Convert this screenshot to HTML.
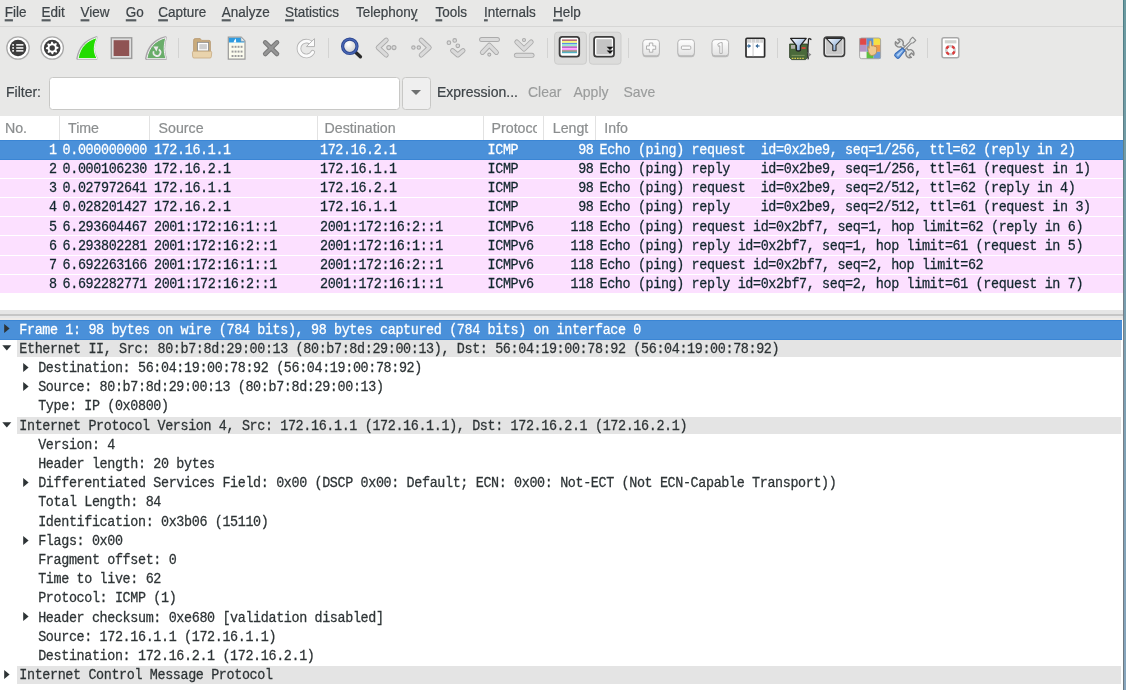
<!DOCTYPE html><html><head><meta charset="utf-8"><style>
*{margin:0;padding:0;box-sizing:border-box}
html,body{width:1126px;height:690px;overflow:hidden;background:#e8e8e7}
body{position:relative;font-family:"Liberation Sans",sans-serif;-webkit-font-smoothing:antialiased}
.g{will-change:transform}
.a{position:absolute}
.m{position:absolute;top:4px;font-size:13.5px;line-height:17px;color:#3e4448;white-space:pre;-webkit-text-stroke-width:0.2px;transform:scaleY(1.1);transform-origin:0 13px}
.m u{text-decoration:underline;text-decoration-thickness:1.6px;text-underline-offset:1.5px;text-decoration-color:#565c60}
.hd{position:absolute;top:117.5px;font-size:14.2px;line-height:20px;color:#8b8e8f;white-space:pre;overflow:hidden;-webkit-text-stroke-width:0.2px}
.sep{position:absolute;top:116px;width:1px;height:24px;background:#e2e2e2}
.pr{position:absolute;left:0;width:1123px;height:19px;font-family:"Liberation Mono",monospace;font-size:13.4px;letter-spacing:-0.36px;line-height:19px;white-space:pre;color:#12272e;-webkit-text-stroke-width:0.25px}
.pr span{position:absolute;top:0.6px;transform:scaleY(1.1);transform-origin:0 9px}
.dr{position:absolute;left:0;width:1123px;height:19.2px;font-family:"Liberation Mono",monospace;font-size:13.4px;letter-spacing:-0.36px;line-height:19px;white-space:pre;color:#2e3436;-webkit-text-stroke-width:0.25px}
.dr .t{position:absolute;top:1px;transform:scaleY(1.1);transform-origin:0 9px}
.tb{position:absolute}
</style></head><body><div class="g" style="position:absolute;left:0;top:0;width:1126px;height:690px">

<div class="m" style="left:4.7px"><u>F</u>ile</div>
<div class="m" style="left:41.6px"><u>E</u>dit</div>
<div class="m" style="left:80.6px"><u>V</u>iew</div>
<div class="m" style="left:125.8px"><u>G</u>o</div>
<div class="m" style="left:158.2px"><u>C</u>apture</div>
<div class="m" style="left:221.7px"><u>A</u>nalyze</div>
<div class="m" style="left:285px"><u>S</u>tatistics</div>
<div class="m" style="left:356px">Telephon<u>y</u></div>
<div class="m" style="left:435.5px"><u>T</u>ools</div>
<div class="m" style="left:484px"><u>I</u>nternals</div>
<div class="m" style="left:553px"><u>H</u>elp</div>
<div class="a" style="left:0;top:26px;width:1123px;height:1px;background:#d6d6d5"></div>
<div class="a" style="left:178.0px;top:38px;width:1px;height:20px;background:#d3d3d2"></div>
<div class="a" style="left:327.5px;top:38px;width:1px;height:20px;background:#d3d3d2"></div>
<div class="a" style="left:546.5px;top:38px;width:1px;height:20px;background:#d3d3d2"></div>
<div class="a" style="left:627.5px;top:38px;width:1px;height:20px;background:#d3d3d2"></div>
<div class="a" style="left:777.0px;top:38px;width:1px;height:20px;background:#d3d3d2"></div>
<div class="a" style="left:926.5px;top:38px;width:1px;height:20px;background:#d3d3d2"></div>
<div class="a" style="left:6px;top:84px;font-size:14px;line-height:17px;color:#3e4448;-webkit-text-stroke-width:0.2px;transform:scaleY(1.08);transform-origin:0 13px">Filter:</div>
<div class="a" style="left:48.5px;top:76.5px;width:351px;height:33px;background:#fff;border:1.5px solid #c8c8c6;border-radius:3.5px"></div>
<div class="a" style="left:401.5px;top:76.5px;width:29px;height:33px;background:#efefef;border:1.5px solid #c8c8c6;border-radius:3.5px"></div>
<div class="a" style="left:411px;top:90px;width:0;height:0;border-left:5px solid transparent;border-right:5px solid transparent;border-top:5px solid #6e7070"></div>
<div class="a" style="left:437px;top:84px;font-size:14px;line-height:17px;color:#3e4448;-webkit-text-stroke-width:0.2px;transform:scaleY(1.08);transform-origin:0 13px">Expression...</div>
<div class="a" style="left:528px;top:84px;font-size:14px;line-height:17px;color:#9a9c9c;-webkit-text-stroke-width:0.15px;transform:scaleY(1.08);transform-origin:0 13px">Clear</div>
<div class="a" style="left:573.5px;top:84px;font-size:14px;line-height:17px;color:#9a9c9c;-webkit-text-stroke-width:0.15px;transform:scaleY(1.08);transform-origin:0 13px">Apply</div>
<div class="a" style="left:623.5px;top:84px;font-size:14px;line-height:17px;color:#9a9c9c;-webkit-text-stroke-width:0.15px;transform:scaleY(1.08);transform-origin:0 13px">Save</div>
<div class="a" style="left:0;top:116px;width:1123px;height:194px;background:#fff"></div>
<div class="hd" style="left:4.9px;width:50px">No.</div>
<div class="hd" style="left:68px;width:80px">Time</div>
<div class="hd" style="left:158.6px;width:150px">Source</div>
<div class="hd" style="left:324.6px;width:150px">Destination</div>
<div class="hd" style="left:491.6px;width:45.5px">Protocol</div>
<div class="hd" style="left:552.8px;width:36.5px">Length</div>
<div class="hd" style="left:604.3px;width:200px">Info</div>
<div class="sep" style="left:59.0px"></div>
<div class="sep" style="left:149.3px"></div>
<div class="sep" style="left:316.5px"></div>
<div class="sep" style="left:483.1px"></div>
<div class="sep" style="left:543.3px"></div>
<div class="sep" style="left:595.0px"></div>
<div class="pr" style="top:140.0px;height:19.7px;background:#4a90d9;color:#ffffff;box-shadow:inset 0 1px #3a85d4,inset 0 -1px #3a85d4;">
<span style="left:49.12px">1</span>
<span style="left:62.6px">0.000000000</span>
<span style="left:154px">172.16.1.1</span>
<span style="left:320px">172.16.2.1</span>
<span style="left:487.6px">ICMP</span>
<span style="left:578.14px">98</span>
<span style="left:599.5px">Echo (ping) request  id=0x2be9, seq=1/256, ttl=62 (reply in 2)</span>
</div>
<div class="pr" style="top:159.5px;height:18.3px;background:#fce0ff;color:#12272e;">
<span style="left:49.12px">2</span>
<span style="left:62.6px">0.000106230</span>
<span style="left:154px">172.16.2.1</span>
<span style="left:320px">172.16.1.1</span>
<span style="left:487.6px">ICMP</span>
<span style="left:578.14px">98</span>
<span style="left:599.5px">Echo (ping) reply    id=0x2be9, seq=1/256, ttl=61 (request in 1)</span>
</div>
<div class="pr" style="top:178.70000000000002px;height:18.3px;background:#fce0ff;color:#12272e;">
<span style="left:49.12px">3</span>
<span style="left:62.6px">0.027972641</span>
<span style="left:154px">172.16.1.1</span>
<span style="left:320px">172.16.2.1</span>
<span style="left:487.6px">ICMP</span>
<span style="left:578.14px">98</span>
<span style="left:599.5px">Echo (ping) request  id=0x2be9, seq=2/512, ttl=62 (reply in 4)</span>
</div>
<div class="pr" style="top:197.9px;height:18.3px;background:#fce0ff;color:#12272e;">
<span style="left:49.12px">4</span>
<span style="left:62.6px">0.028201427</span>
<span style="left:154px">172.16.2.1</span>
<span style="left:320px">172.16.1.1</span>
<span style="left:487.6px">ICMP</span>
<span style="left:578.14px">98</span>
<span style="left:599.5px">Echo (ping) reply    id=0x2be9, seq=2/512, ttl=61 (request in 3)</span>
</div>
<div class="pr" style="top:217.10000000000002px;height:18.3px;background:#fce0ff;color:#12272e;">
<span style="left:49.12px">5</span>
<span style="left:62.6px">6.293604467</span>
<span style="left:154px">2001:172:16:1::1</span>
<span style="left:320px">2001:172:16:2::1</span>
<span style="left:487.6px">ICMPv6</span>
<span style="left:570.46px">118</span>
<span style="left:599.5px">Echo (ping) request id=0x2bf7, seq=1, hop limit=62 (reply in 6)</span>
</div>
<div class="pr" style="top:236.3px;height:18.3px;background:#fce0ff;color:#12272e;">
<span style="left:49.12px">6</span>
<span style="left:62.6px">6.293802281</span>
<span style="left:154px">2001:172:16:2::1</span>
<span style="left:320px">2001:172:16:1::1</span>
<span style="left:487.6px">ICMPv6</span>
<span style="left:570.46px">118</span>
<span style="left:599.5px">Echo (ping) reply id=0x2bf7, seq=1, hop limit=61 (request in 5)</span>
</div>
<div class="pr" style="top:255.5px;height:18.3px;background:#fce0ff;color:#12272e;">
<span style="left:49.12px">7</span>
<span style="left:62.6px">6.692263166</span>
<span style="left:154px">2001:172:16:1::1</span>
<span style="left:320px">2001:172:16:2::1</span>
<span style="left:487.6px">ICMPv6</span>
<span style="left:570.46px">118</span>
<span style="left:599.5px">Echo (ping) request id=0x2bf7, seq=2, hop limit=62</span>
</div>
<div class="pr" style="top:274.70000000000005px;height:18.3px;background:#fce0ff;color:#12272e;">
<span style="left:49.12px">8</span>
<span style="left:62.6px">6.692282771</span>
<span style="left:154px">2001:172:16:2::1</span>
<span style="left:320px">2001:172:16:1::1</span>
<span style="left:487.6px">ICMPv6</span>
<span style="left:570.46px">118</span>
<span style="left:599.5px">Echo (ping) reply id=0x2bf7, seq=2, hop limit=61 (request in 7)</span>
</div>
<div class="a" style="left:0;top:310px;width:1123px;height:4px;background:#e6e6e6"></div>
<div class="a" style="left:0;top:314px;width:1123px;height:1.5px;background:#c6c6c6"></div>
<div class="a" style="left:0;top:315.5px;width:1123px;height:2.5px;background:#e8e8e8"></div>
<div class="a" style="left:0;top:318px;width:1123px;height:1.6px;background:#efebe7"></div>
<div class="a" style="left:0;top:319.6px;width:1123px;height:371px;background:#fff"></div>
<div class="a" style="left:0;top:319.6px;width:1122px;height:20.1px;background:#4a90d9;box-shadow:inset 0 1px #3a85d4,inset 0 -1px #3a85d4"></div>
<svg class="a" style="left:4.0px;top:324.40000000000003px" width="7" height="10" viewBox="0 0 7 10"><polygon points="0.2,0 0.2,9 5.6,4.5" fill="#2e3436"/></svg>
<div class="dr" style="top:319.6px;pointer-events:none"><span class="t" style="left:19.3px;color:#ffffff">Frame 1: 98 bytes on wire (784 bits), 98 bytes captured (784 bits) on interface 0</span></div>
<div class="a" style="left:17px;top:339.8px;width:1104px;height:17.6px;background:#e4e4e4"></div>
<svg class="a" style="left:2.0px;top:345.1px" width="10" height="7" viewBox="0 0 10 7"><polygon points="0.3,0.2 9.3,0.2 4.8,5.6" fill="#2e3436"/></svg>
<div class="dr" style="top:338.8px;pointer-events:none"><span class="t" style="left:19.3px;color:#2e3436">Ethernet II, Src: 80:b7:8d:29:00:13 (80:b7:8d:29:00:13), Dst: 56:04:19:00:78:92 (56:04:19:00:78:92)</span></div>
<svg class="a" style="left:23.3px;top:362.8px" width="7" height="10" viewBox="0 0 7 10"><polygon points="0.2,0 0.2,9 5.6,4.5" fill="#2e3436"/></svg>
<div class="dr" style="top:358.0px;pointer-events:none"><span class="t" style="left:38.2px;color:#2e3436">Destination: 56:04:19:00:78:92 (56:04:19:00:78:92)</span></div>
<svg class="a" style="left:23.3px;top:382.00000000000006px" width="7" height="10" viewBox="0 0 7 10"><polygon points="0.2,0 0.2,9 5.6,4.5" fill="#2e3436"/></svg>
<div class="dr" style="top:377.20000000000005px;pointer-events:none"><span class="t" style="left:38.2px;color:#2e3436">Source: 80:b7:8d:29:00:13 (80:b7:8d:29:00:13)</span></div>
<div class="dr" style="top:396.40000000000003px;pointer-events:none"><span class="t" style="left:38.2px;color:#2e3436">Type: IP (0x0800)</span></div>
<div class="a" style="left:17px;top:416.6px;width:1104px;height:17.6px;background:#e4e4e4"></div>
<svg class="a" style="left:2.0px;top:421.90000000000003px" width="10" height="7" viewBox="0 0 10 7"><polygon points="0.3,0.2 9.3,0.2 4.8,5.6" fill="#2e3436"/></svg>
<div class="dr" style="top:415.6px;pointer-events:none"><span class="t" style="left:19.3px;color:#2e3436">Internet Protocol Version 4, Src: 172.16.1.1 (172.16.1.1), Dst: 172.16.2.1 (172.16.2.1)</span></div>
<div class="dr" style="top:434.8px;pointer-events:none"><span class="t" style="left:38.2px;color:#2e3436">Version: 4</span></div>
<div class="dr" style="top:454.0px;pointer-events:none"><span class="t" style="left:38.2px;color:#2e3436">Header length: 20 bytes</span></div>
<svg class="a" style="left:23.3px;top:478.00000000000006px" width="7" height="10" viewBox="0 0 7 10"><polygon points="0.2,0 0.2,9 5.6,4.5" fill="#2e3436"/></svg>
<div class="dr" style="top:473.20000000000005px;pointer-events:none"><span class="t" style="left:38.2px;color:#2e3436">Differentiated Services Field: 0x00 (DSCP 0x00: Default; ECN: 0x00: Not-ECT (Not ECN-Capable Transport))</span></div>
<div class="dr" style="top:492.4px;pointer-events:none"><span class="t" style="left:38.2px;color:#2e3436">Total Length: 84</span></div>
<div class="dr" style="top:511.6px;pointer-events:none"><span class="t" style="left:38.2px;color:#2e3436">Identification: 0x3b06 (15110)</span></div>
<svg class="a" style="left:23.3px;top:535.5999999999999px" width="7" height="10" viewBox="0 0 7 10"><polygon points="0.2,0 0.2,9 5.6,4.5" fill="#2e3436"/></svg>
<div class="dr" style="top:530.8px;pointer-events:none"><span class="t" style="left:38.2px;color:#2e3436">Flags: 0x00</span></div>
<div class="dr" style="top:550.0px;pointer-events:none"><span class="t" style="left:38.2px;color:#2e3436">Fragment offset: 0</span></div>
<div class="dr" style="top:569.2px;pointer-events:none"><span class="t" style="left:38.2px;color:#2e3436">Time to live: 62</span></div>
<div class="dr" style="top:588.4000000000001px;pointer-events:none"><span class="t" style="left:38.2px;color:#2e3436">Protocol: ICMP (1)</span></div>
<svg class="a" style="left:23.3px;top:612.4px" width="7" height="10" viewBox="0 0 7 10"><polygon points="0.2,0 0.2,9 5.6,4.5" fill="#2e3436"/></svg>
<div class="dr" style="top:607.6px;pointer-events:none"><span class="t" style="left:38.2px;color:#2e3436">Header checksum: 0xe680 [validation disabled]</span></div>
<div class="dr" style="top:626.8px;pointer-events:none"><span class="t" style="left:38.2px;color:#2e3436">Source: 172.16.1.1 (172.16.1.1)</span></div>
<div class="dr" style="top:646.0px;pointer-events:none"><span class="t" style="left:38.2px;color:#2e3436">Destination: 172.16.2.1 (172.16.2.1)</span></div>
<div class="a" style="left:17px;top:666.2px;width:1104px;height:17.6px;background:#e4e4e4"></div>
<svg class="a" style="left:4.0px;top:670.0px" width="7" height="10" viewBox="0 0 7 10"><polygon points="0.2,0 0.2,9 5.6,4.5" fill="#2e3436"/></svg>
<div class="dr" style="top:665.2px;pointer-events:none"><span class="t" style="left:19.3px;color:#2e3436">Internet Control Message Protocol</span></div>
<div class="a" style="left:1122.5px;top:0;width:3.5px;height:690px;background:linear-gradient(#6a9aa0,#7a9eb0 50%,#88a6be)"></div>
<div class="a" style="left:1122.5px;top:0;width:1px;height:690px;background:linear-gradient(#4c7e86,#7a8088 50%,#6c7880)"></div>
<svg class="a" style="left:0;top:0" width="1126" height="70" viewBox="0 0 1126 70"><defs><linearGradient id="gz" x1="0" y1="0" x2="0" y2="1"><stop offset="0" stop-color="#ffffff"/><stop offset="1" stop-color="#e2e2e2"/></linearGradient><linearGradient id="gf" x1="0" y1="0" x2="1" y2="1"><stop offset="0" stop-color="#ffffff"/><stop offset="1" stop-color="#6a98d0"/></linearGradient><radialGradient id="gm" cx="0.4" cy="0.35" r="0.7"><stop offset="0" stop-color="#ffffff"/><stop offset="1" stop-color="#c8c8c8"/></radialGradient></defs><circle cx="18" cy="48" r="11.2" fill="#ffffff" stroke="#a9a9a9" stroke-width="1.3"/><circle cx="18" cy="48" r="8.3" fill="#3d3d3d"/><rect x="12.2" y="44.0" width="1.8" height="1.7" fill="#e8e8e8"/><rect x="16.2" y="44.0" width="7.2" height="1.7" fill="#e8e8e8"/><rect x="12.2" y="47.1" width="1.8" height="1.7" fill="#e8e8e8"/><rect x="16.2" y="47.1" width="7.2" height="1.7" fill="#e8e8e8"/><rect x="12.2" y="50.0" width="1.8" height="1.7" fill="#e8e8e8"/><rect x="16.2" y="50.0" width="7.2" height="1.7" fill="#e8e8e8"/><circle cx="52.2" cy="48" r="11.2" fill="#ffffff" stroke="#a9a9a9" stroke-width="1.3"/><circle cx="52.2" cy="48" r="8.3" fill="#3d3d3d"/><polygon points="52.20,41.70 53.43,41.82 53.96,43.75 54.76,44.18 56.65,43.55 57.44,44.50 56.45,46.24 56.71,47.10 58.50,48.00 58.38,49.23 56.45,49.76 56.02,50.56 56.65,52.45 55.70,53.24 53.96,52.25 53.10,52.51 52.20,54.30 50.97,54.18 50.44,52.25 49.64,51.82 47.75,52.45 46.96,51.50 47.95,49.76 47.69,48.90 45.90,48.00 46.02,46.77 47.95,46.24 48.38,45.44 47.75,43.55 48.70,42.76 50.44,43.75 51.30,43.49" fill="#ffffff" transform="rotate(-8 52.2 48)"/><circle cx="52.2" cy="48" r="2.7" fill="#3d3d3d"/><path d="M77.5,58.5 C79.5,47 86,40.5 96.5,37.5 C93,45 92.5,52 96.5,58.5 Z" fill="#ffffff" stroke="#aaa4ac" stroke-width="2.4" stroke-linejoin="round"/><path d="M77.5,58.5 C79.5,47 86,40.5 96.5,37.5 C93,45 92.5,52 96.5,58.5 Z" fill="#22dc00" stroke="#ffffff" stroke-width="0.9" stroke-linejoin="round" transform="translate(0.6,0.1)"/><rect x="111.3" y="37.8" width="20.4" height="20.6" fill="#dedede" stroke="#9c9c9c" stroke-width="1.4"/><rect x="113.6" y="40.2" width="15.6" height="15.8" fill="#8f5353"/><path d="M146.4,58.6 C148.2,47 155,40.2 165.4,37.6 C163.2,45 163.0,52 165.6,58.6 Z" fill="#f0f0f0" stroke="#a8a4a8" stroke-width="2.8" stroke-linejoin="round"/><path d="M146.4,58.6 C148.2,47 155,40.2 165.4,37.6 C163.2,45 163.0,52 165.6,58.6 Z" fill="#6aad6a" stroke="#f4f0f4" stroke-width="1.0" stroke-linejoin="round" transform="translate(0.5,0.1)"/><path d="M158.75,49.4 A3.5,3.5 0 1 1 153.7,51.2" fill="none" stroke="#eeeaee" stroke-width="1.7"/><path d="M153.4,46.4 L158.4,46.4 L156.4,51.6 Z" fill="#eeeaee"/><path d="M193.6,40.2 Q193.6,38.6 195.2,38.6 L200.2,38.6 L201.6,40.4 L209,40.4 Q210.4,40.4 210.4,41.8 L210.4,56 L193.6,56 Z" fill="#c9ab7c" stroke="#b59770" stroke-width="0.8"/><rect x="197.4" y="42.3" width="11.2" height="8.8" fill="#ffffff" stroke="#8a8a8a" stroke-width="0.9"/><rect x="199.3" y="44.1" width="7.6" height="5.2" fill="#cfcfcf"/><path d="M192.4,52.6 Q192.4,51.2 193.8,51.2 L210.4,51.2 Q211.7,51.2 211.7,52.6 L211.3,56.8 Q211.2,58 210,58 L194,58 Q192.8,58 192.7,56.8 Z" fill="#e9d3ac" stroke="#c6aa80" stroke-width="0.8"/><path d="M228.3,37.2 L241.2,37.2 L245,41 L245,59.2 L228.3,59.2 Z" fill="#fbfbee" stroke="#9a9a9a" stroke-width="1.2"/><path d="M228.9,37.8 L240.9,37.8 L244.4,41.3 L244.4,42.4 L228.9,42.4 Z" fill="#2e9be0"/><path d="M233.5,42.4 Q234.3,39.6 235.8,38.4 L236.2,42.4 Z" fill="#ffffff"/><path d="M241,37.6 L241,41.2 L244.8,41.2" fill="#e8f4fb" stroke="#9a9a9a" stroke-width="0.6"/><rect x="231.6" y="45.8" width="1.9" height="2.0" fill="#9a9a9a"/><rect x="234.6" y="45.8" width="1.9" height="2.0" fill="#9a9a9a"/><rect x="237.6" y="45.8" width="1.9" height="2.0" fill="#9a9a9a"/><rect x="240.6" y="45.8" width="1.9" height="2.0" fill="#9a9a9a"/><rect x="231.6" y="50.6" width="1.9" height="2.0" fill="#9a9a9a"/><rect x="234.6" y="50.6" width="1.9" height="2.0" fill="#9a9a9a"/><rect x="237.6" y="50.6" width="1.9" height="2.0" fill="#9a9a9a"/><rect x="240.6" y="50.6" width="1.9" height="2.0" fill="#9a9a9a"/><rect x="231.6" y="55.0" width="1.9" height="2.0" fill="#9a9a9a"/><rect x="234.6" y="55.0" width="1.9" height="2.0" fill="#9a9a9a"/><rect x="237.6" y="55.0" width="1.9" height="2.0" fill="#9a9a9a"/><rect x="240.6" y="55.0" width="1.9" height="2.0" fill="#9a9a9a"/><path d="M265.2,42.4 L277,54.0 M277,42.4 L265.2,54.0" stroke="#777777" stroke-width="4.6" stroke-linecap="round"/><path d="M265.2,42.4 L277,54.0 M277,42.4 L265.2,54.0" stroke="#959595" stroke-width="2.6" stroke-linecap="round"/><path d="M312.6,44.6 A7.4,7.4 0 1 0 312.8,52.2" fill="none" stroke="#b4b4b4" stroke-width="4.6" stroke-linecap="round"/><path d="M312.6,44.6 A7.4,7.4 0 1 0 312.8,52.2" fill="none" stroke="#fbfbfb" stroke-width="2.8" stroke-linecap="round"/><path d="M314.5,38.6 L314.5,46.6 L306.4,46.6 Z" fill="#fbfbfb" stroke="#b4b4b4" stroke-width="1" stroke-linejoin="round"/><path d="M355.6,52.2 L360.4,56.8" stroke="#2a2a2a" stroke-width="3.4" stroke-linecap="round"/><circle cx="349.8" cy="46.3" r="7.2" fill="url(#gm)" stroke="#2c4690" stroke-width="3.2"/><circle cx="349.8" cy="46.3" r="7.2" fill="none" stroke="#4866b4" stroke-width="1.4"/><path d="M386.2,40.2 L378.2,47.6 L386.2,55.0" fill="none" stroke="#ababab" stroke-width="5.0" stroke-linecap="round" stroke-linejoin="round"/><path d="M386.2,40.2 L378.2,47.6 L386.2,55.0" fill="none" stroke="#dadada" stroke-width="3.2" stroke-linecap="round" stroke-linejoin="round"/><circle cx="388.8" cy="47.6" r="2.0" fill="#dcdcdc" stroke="#ababab" stroke-width="1.1"/><circle cx="394.0" cy="47.6" r="2.0" fill="#dcdcdc" stroke="#ababab" stroke-width="1.1"/><path d="M421.2,40.2 L429.2,47.6 L421.2,55.0" fill="none" stroke="#ababab" stroke-width="5.0" stroke-linecap="round" stroke-linejoin="round"/><path d="M421.2,40.2 L429.2,47.6 L421.2,55.0" fill="none" stroke="#dadada" stroke-width="3.2" stroke-linecap="round" stroke-linejoin="round"/><circle cx="413.4" cy="47.6" r="1.7" fill="#dcdcdc" stroke="#ababab" stroke-width="1.1"/><circle cx="418.8" cy="47.6" r="1.7" fill="#dcdcdc" stroke="#ababab" stroke-width="1.1"/><circle cx="448.9" cy="42.7" r="1.8" fill="#dcdcdc" stroke="#ababab" stroke-width="1.1"/><circle cx="454.7" cy="40.4" r="1.8" fill="#dcdcdc" stroke="#ababab" stroke-width="1.1"/><circle cx="457.8" cy="45.8" r="1.8" fill="#dcdcdc" stroke="#ababab" stroke-width="1.1"/><path d="M452.6,50.6 L457.8,55.0 L463.0,50.6" fill="none" stroke="#ababab" stroke-width="5.0" stroke-linecap="round" stroke-linejoin="round"/><path d="M452.6,50.6 L457.8,55.0 L463.0,50.6" fill="none" stroke="#dadada" stroke-width="3.2" stroke-linecap="round" stroke-linejoin="round"/><path d="M481.6,39.5 L497.4,39.5" fill="none" stroke="#ababab" stroke-width="5.0" stroke-linecap="round" stroke-linejoin="round"/><path d="M481.6,39.5 L497.4,39.5" fill="none" stroke="#dadada" stroke-width="3.2" stroke-linecap="round" stroke-linejoin="round"/><path d="M482.4,52.4 L489.3,45.2 L496.4,52.4" fill="none" stroke="#ababab" stroke-width="5.0" stroke-linecap="round" stroke-linejoin="round"/><path d="M482.4,52.4 L489.3,45.2 L496.4,52.4" fill="none" stroke="#dadada" stroke-width="3.2" stroke-linecap="round" stroke-linejoin="round"/><circle cx="489.3" cy="54.6" r="1.5" fill="#dcdcdc" stroke="#ababab" stroke-width="1.1"/><path d="M516.8,42.0 L524.0,49.0 L531.2,42.0" fill="none" stroke="#ababab" stroke-width="5.0" stroke-linecap="round" stroke-linejoin="round"/><path d="M516.8,42.0 L524.0,49.0 L531.2,42.0" fill="none" stroke="#dadada" stroke-width="3.2" stroke-linecap="round" stroke-linejoin="round"/><circle cx="524.0" cy="40.0" r="1.5" fill="#dcdcdc" stroke="#ababab" stroke-width="1.1"/><path d="M516.4,55.3 L532.0,55.3" fill="none" stroke="#ababab" stroke-width="5.0" stroke-linecap="round" stroke-linejoin="round"/><path d="M516.4,55.3 L532.0,55.3" fill="none" stroke="#dadada" stroke-width="3.2" stroke-linecap="round" stroke-linejoin="round"/><rect x="554.6" y="32.2" width="31.8" height="32" rx="3" fill="#dcdcdb" stroke="#cdcdcc" stroke-width="1"/><rect x="559.6" y="36.9" width="19.6" height="19.8" rx="2.6" fill="#ffffff" stroke="#3d3d3d" stroke-width="1.8"/><rect x="562" y="39.4" width="15" height="1.6" fill="#b46e7c"/><rect x="562" y="41.1" width="15" height="1.7" fill="#f4f86c"/><rect x="562" y="42.9" width="15" height="1.6" fill="#5a90e4"/><rect x="562" y="44.6" width="15" height="1.5" fill="#96f2c4"/><rect x="562" y="46.3" width="15" height="1.6" fill="#b05cbc"/><rect x="562" y="48.2" width="15" height="2.0" fill="#ff94ff"/><rect x="562" y="50.4" width="15" height="1.3" fill="#7e6650"/><rect x="562" y="51.7" width="15" height="1.5" fill="#4eb2c4"/><rect x="589.4" y="32.2" width="31.6" height="32" rx="3" fill="#dcdcdb" stroke="#cdcdcc" stroke-width="1"/><rect x="594.1" y="36.9" width="19.9" height="19.8" rx="2.6" fill="#ffffff" stroke="#3d3d3d" stroke-width="1.8"/><rect x="596.4" y="39.2" width="15.4" height="15.3" fill="#c4c4c4"/><path d="M606.6,46.8 L613.4,46.8 L610,50.0 Z M606.6,50.6 L613.4,50.6 L610,53.8 Z" fill="#111111"/><rect x="642.5999999999999" y="40.6" width="17" height="16.6" rx="3.2" fill="#a8a8a8" opacity="0.7"/><rect x="642.8" y="39.6" width="16.6" height="16.2" rx="3" fill="url(#gz)" stroke="#b4b4b4" stroke-width="1.0"/><rect x="677.5999999999999" y="40.6" width="17" height="16.6" rx="3.2" fill="#a8a8a8" opacity="0.7"/><rect x="677.8" y="39.6" width="16.6" height="16.2" rx="3" fill="url(#gz)" stroke="#b4b4b4" stroke-width="1.0"/><rect x="711.8" y="40.6" width="17" height="16.6" rx="3.2" fill="#a8a8a8" opacity="0.7"/><rect x="712.0" y="39.6" width="16.6" height="16.2" rx="3" fill="url(#gz)" stroke="#b4b4b4" stroke-width="1.0"/><path d="M649.4,43.0 h3.4 v2.8999999999999995 h2.8999999999999995 v3.4 h-2.8999999999999995 v2.8999999999999995 h-3.4 v-2.8999999999999995 h-2.8999999999999995 v-3.4 h2.8999999999999995 Z" fill="#fafafa" stroke="#a8a8a8" stroke-width="0.9"/><rect x="681.4" y="46.0" width="9.4" height="3.4" rx="1" fill="#fafafa" stroke="#a8a8a8" stroke-width="0.9"/><path d="M717.8,44.0 L720.6,42.6 L722.2,42.6 L722.2,53.4 L719.8,53.4 L719.8,45.8 L718.4,46.4 Z" fill="#fafafa" stroke="#a8a8a8" stroke-width="0.9"/><rect x="746.0" y="38.4" width="18.6" height="18.6" rx="1" fill="#ffffff" stroke="#2a2a2a" stroke-width="1.7"/><rect x="746.9" y="39.3" width="16.8" height="3.4" fill="#d2d2d2"/><rect x="751.0" y="39.3" width="0.8" height="3.4" fill="#f4f4f4"/><rect x="755.2" y="39.3" width="0.8" height="3.4" fill="#f4f4f4"/><rect x="759.4" y="39.3" width="0.8" height="3.4" fill="#f4f4f4"/><rect x="752.2" y="42.7" width="1.8" height="13.4" fill="#e2e2e2"/><path d="M746.8,46.0 L750.4,46.0" stroke="#3c6e9c" stroke-width="1.2"/><path d="M748.4,43.8 L751.0,46.0 L748.4,48.2 Z" fill="#3c6e9c"/><path d="M759.6,46.0 L756.0,46.0" stroke="#3c6e9c" stroke-width="1.2"/><path d="M758.0,43.8 L755.4,46.0 L758.0,48.2 Z" fill="#3c6e9c"/><path d="M789.6,44.0 L807.4,44.0 L807.4,57.6 L805.6,59.6 L791.6,59.6 L789.6,57.6 Z" fill="#4a6a3a" stroke="#2c3c24" stroke-width="0.8"/><rect x="791" y="45" width="4" height="3.8" fill="#b0b0a8"/><rect x="801.6" y="47" width="4" height="2" fill="#c84a3a"/><path d="M791.6,55.4 h13" stroke="#8a9a6a" stroke-width="0.8"/><path d="M791.8,58.4 h13" stroke="#d8c850" stroke-width="1.2" stroke-dasharray="1.6,1"/><path d="M808.6,38.4 Q807.4,48 808.2,59.4 M809.2,38.4 L811.4,39.6" fill="none" stroke="#222222" stroke-width="1.2"/><path d="M807.6,52 L811.4,54.6 L808.6,57" fill="#8a8a8a"/><path d="M790.6,38.4 L806.2,38.4 L800.4,45.6 L800.4,50.4 Q798.4,51.6 796.4,50.4 L796.4,45.6 Z" fill="url(#gf)" stroke="#222222" stroke-width="1.3" stroke-linejoin="round"/><rect x="824.2" y="37.2" width="20.2" height="19.2" rx="2.8" fill="#c8c8c8" stroke="#404040" stroke-width="1.8"/><rect x="825.6" y="38.6" width="17.4" height="16.4" rx="1.6" fill="none" stroke="#f2f2f2" stroke-width="0.9"/><path d="M826.2,38.4 L842.4,38.4 L836.0,45.2 L836.0,50.4 Q834.4,51.2 832.8,50.4 L832.8,45.2 Z" fill="url(#gf)" stroke="#2a2a2a" stroke-width="1.1" stroke-linejoin="round"/><rect x="859.6" y="38.0" width="7" height="6.9" fill="#e04848"/><rect x="866.6" y="38.0" width="7" height="6.9" fill="#5a92d8"/><rect x="873.6" y="38.0" width="7" height="6.9" fill="#f6e040"/><rect x="859.6" y="44.9" width="7" height="6.9" fill="#b892c4"/><rect x="866.6" y="44.9" width="7" height="6.9" fill="#6a9ad8"/><rect x="873.6" y="44.9" width="7" height="6.9" fill="#f29a46"/><rect x="859.6" y="51.8" width="7" height="6.9" fill="#f2f2ee"/><rect x="866.6" y="51.8" width="7" height="6.9" fill="#5cc040"/><rect x="873.6" y="51.8" width="7" height="6.9" fill="#6a98d8"/><rect x="859.6" y="38.0" width="21" height="20.7" rx="2" fill="none" stroke="#a0a0a0" stroke-width="0.9"/><path d="M868.4,51.6 L867.6,47.4 Q867.4,46.4 868.4,46.6 L869.0,48.4 L869.4,41.2 Q870.4,40.2 871.2,41.2 L871.6,46.0 Q873.6,45.4 874.6,46.4 Q876.6,46.2 876.8,48 L876.4,53.0 Q875.0,55.6 871.6,55.6 Q869.4,55.4 868.4,51.6 Z" fill="#efc88e" stroke="#b88a4e" stroke-width="0.8"/><g transform="translate(904.6,48.4) rotate(45)"><path d="M3.75,-1.4 L-3.75,-1.4 A4,4 0 0 0 -11.17,-1.6 L-8.2,-1.6 L-8.2,1.6 L-11.17,1.6 A4,4 0 0 0 -3.75,1.4 L3.75,1.4 A4,4 0 0 0 11.17,1.6 L8.2,1.6 L8.2,-1.6 L11.17,-1.6 A4,4 0 0 0 3.75,-1.4 Z" fill="#e4e6e4" stroke="#8a8a8a" stroke-width="1.4" stroke-linejoin="round"/></g><g transform="translate(904.6,48.4) rotate(-45)"><path d="M-1,-1.1 L8.5,-1.1 L10.2,-2.2 L13.6,-2.2 L13.6,2.2 L10.2,2.2 L8.5,1.1 L-1,1.1 Z" fill="#e8eae8" stroke="#8a8a8a" stroke-width="1.1" stroke-linejoin="round"/><path d="M-1.2,-1.7 L-10.4,-2.8 Q-12.2,-2.8 -12.2,-1.2 L-12.2,1.2 Q-12.2,2.8 -10.4,2.8 L-1.2,1.7 Z" fill="#6a9fe0" stroke="#3a6cb8" stroke-width="1.1" stroke-linejoin="round"/><path d="M-3,-0.5 L-10.2,-0.9 L-10.2,0.9 L-3,0.5 Z" fill="#bcd6f4"/></g><rect x="942.0" y="37.7" width="16.8" height="20.1" rx="2" fill="#ffffff" stroke="#a8a8a8" stroke-width="1.5"/><rect x="944.8" y="40.2" width="11.6" height="3.2" fill="#d0d2ce"/><circle cx="950.4" cy="50.2" r="4.2" fill="none" stroke="#c8c8c8" stroke-width="2.4"/><circle cx="950.4" cy="50.2" r="4.2" fill="none" stroke="#dc3c3c" stroke-width="2.4" stroke-dasharray="3.1,3.5" stroke-dashoffset="-1.2"/></svg>
</div></body></html>
